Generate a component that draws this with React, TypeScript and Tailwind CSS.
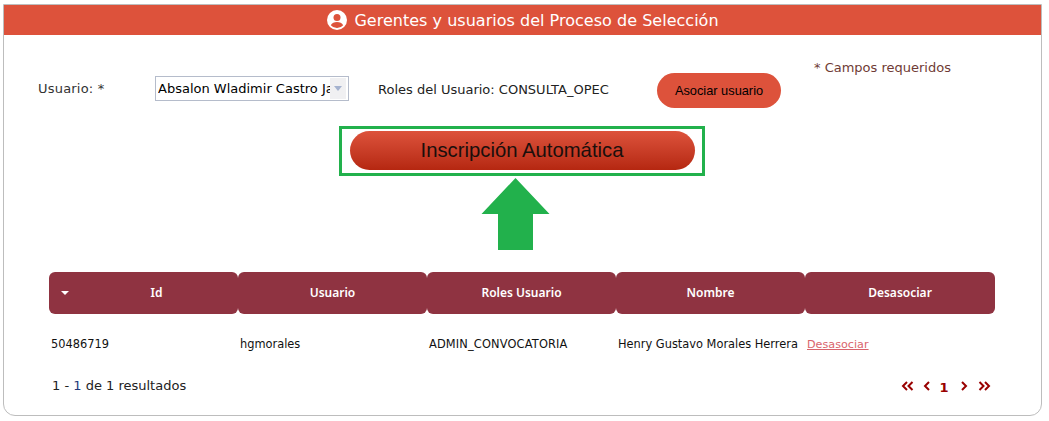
const font = "font-['DejaVu_Sans',Verdana,sans-serif]";
const arial = "font-['Liberation_Sans',Arial,sans-serif]";
const columns = ['Id', 'Usuario', 'Roles Usuario', 'Nombre', 'Desasociar'];

function Pager() {
  return (
    <div className="flex items-center text-[#990000]">
      <svg width="13" height="10" viewBox="0 0 13 10" fill="none" stroke="currentColor" strokeWidth="2">
        <path d="M6 1 2 5l4 4M11.500 1 7.500 5l4 4" />
      </svg>
      <svg className="ml-[9px]" width="7" height="10" viewBox="0 0 7 10" fill="none" stroke="currentColor" strokeWidth="2">
        <path d="M6 1 2 5l4 4" />
      </svg>
      <span className="ml-[8px] mt-[3px] w-[12px] text-center text-[13px] font-bold leading-none">1</span>
      <svg className="ml-[11px]" width="7" height="10" viewBox="0 0 7 10" fill="none" stroke="currentColor" strokeWidth="2">
        <path d="m1 1 4 4-4 4" />
      </svg>
      <svg className="ml-[10px]" width="13" height="10" viewBox="0 0 13 10" fill="none" stroke="currentColor" strokeWidth="2">
        <path d="m1.500 1 4 4-4 4M7 1l4 4-4 4" />
      </svg>
    </div>
  );
}

export default function App() {
  return (
    <div className={`h-[421px] w-[1049px] bg-white pl-[3px] pt-[4px] ${font}`}>
      <div className="h-[412px] w-[1039px] rounded-b-[12px] border border-[#bdbdbd]">
        {/* Header */}
        <div className="flex h-[30px] items-center justify-center gap-[7px] bg-[#dd523b] pl-[1px] text-white">
          <svg width="20" height="20" viewBox="0 0 20 20">
            <circle cx="10" cy="10" r="10" fill="#fff" />
            <circle cx="10" cy="7.500" r="3.500" fill="#dd523b" />
            <path d="M3.800 15.200C5 12.800 7.300 12 10 12s5 .8 6.200 3.200A8 8 0 0 1 10 18a8 8 0 0 1-6.200-2.800z" fill="#dd523b" />
          </svg>
          <span className="pt-[1px] text-[16px] leading-none tracking-[0.02px]">Gerentes y usuarios del Proceso de Selección</span>
        </div>

        {/* Form */}
        <div className="flex h-[91px] items-start text-[13px] text-[#222]">
          <span className="ml-[34px] mt-[46px] w-[117px] leading-[16px] tracking-[0.2px] text-[#333]">Usuario: *</span>
          <div className="mt-[41px] flex h-[25px] w-[194px] items-center border border-[#b5bccb] pl-[2px] pr-[1px]">
            <span className="w-[172px] overflow-hidden whitespace-nowrap text-black">Absalon Wladimir Castro Jaimes</span>
            <span className="flex h-[21px] w-[16px] items-center justify-center bg-[#f0f0f2]">
              <svg width="8" height="5" viewBox="0 0 8 5"><path d="M0 0h8L4 5z" fill="#a4b2cf" /></svg>
            </span>
          </div>
          <span className="ml-[29px] mt-[47px] w-[279px] leading-[16px]">Roles del Usuario: CONSULTA_OPEC</span>
          <button className={`mt-[38px] h-[35px] w-[124px] rounded-full bg-[#dd523b] text-[12.800px] text-black ${arial}`}>Asociar usuario</button>
          <span className="ml-[33px] mt-[25px] whitespace-nowrap leading-[16px] text-[#6f3b35]">* Campos requeridos</span>
        </div>

        {/* Highlighted button */}
        <div className="ml-[335px] flex h-[50px] w-[366px] items-center justify-center border-[3px] border-[#22b14c] pb-[1px]">
          <button className={`h-[39px] w-[345px] rounded-[20px] bg-gradient-to-b from-[#dd523b] to-[#b52710] text-[20.300px] text-[#1a0f0c] ${arial}`}>
            Inscripción Automática
          </button>
        </div>
        <svg className="ml-[477px] mt-[2px] block" width="69" height="72" viewBox="0 0 69 72">
          <path d="M34.500 0 68.500 36H52V72H17V36H.5z" fill="#22b14c" />
        </svg>

        {/* Table */}
        <div className="ml-[45px] mt-[22px] flex w-[946px]">
          {columns.map((c, i) => (
            <div key={c} className={`relative flex h-[42px] items-center justify-center rounded-[6px] bg-[#8f3341] text-white ${i === 4 ? 'w-[190px]' : 'w-[189px]'}`}>
              {i === 0 && (
                <svg className="absolute left-[12px] top-[19px]" width="8" height="4" viewBox="0 0 8 4"><path d="M0 0h8L4 4z" fill="#fff" /></svg>
              )}
              <span className={`font-['Noto_Sans',sans-serif] text-[12px] font-semibold ${i === 0 ? 'pl-[26px]' : ''}`}>{c}</span>
            </div>
          ))}
        </div>
        <div className="ml-[47px] mt-[23px] flex h-[16px] items-center text-[11.400px] text-[#111]">
          <span className="w-[189px]">50486719</span>
          <span className="w-[189px]">hgmorales</span>
          <span className="w-[189px] whitespace-nowrap tracking-[0.15px]">ADMIN_CONVOCATORIA</span>
          <span className="w-[189px] whitespace-nowrap">Henry Gustavo Morales Herrera</span>
          <span className="text-[11.200px] text-[#d9646c] underline">Desasociar</span>
        </div>

        {/* Footer */}
        <div className="ml-[48px] mr-[50px] mt-[25px] flex items-center justify-between">
          <span className="text-[13px] leading-[16px] text-[#222]">1 - <span className="text-[#1f3a78]">1</span> de 1 resultados</span>
          <Pager />
        </div>
      </div>
    </div>
  );
}
